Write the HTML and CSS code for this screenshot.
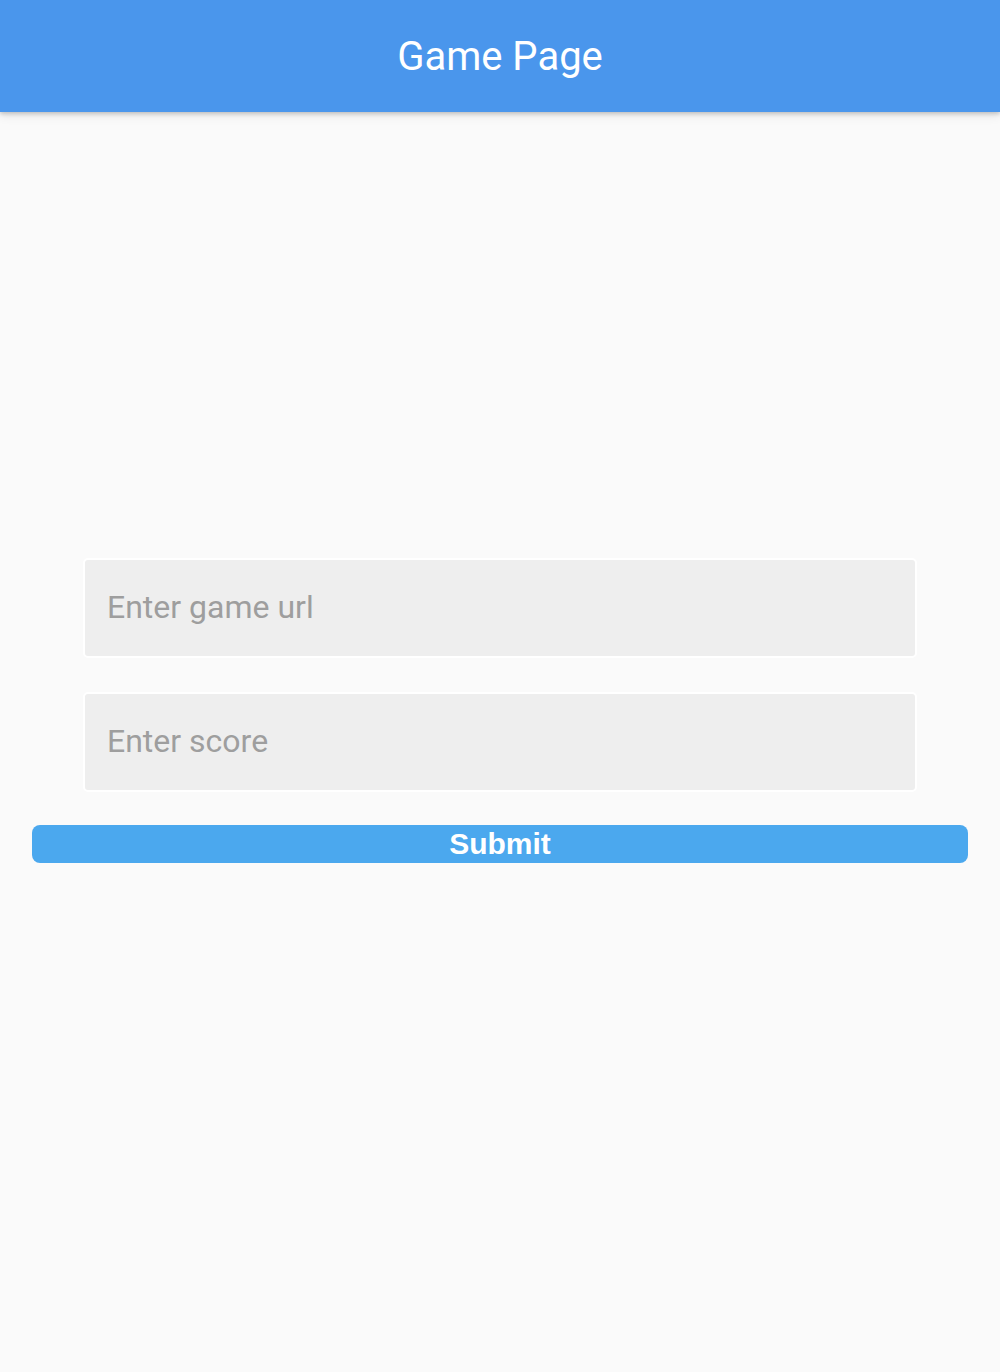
FILE: index.html
```html
<!DOCTYPE html>
<html>
<head>
<meta charset="utf-8">
<link rel="stylesheet" href="styles.css">
</head>
<body>
<header class="app-bar"><h1 class="title">Game Page</h1></header>
<main class="content">
  <form class="form">
    <div class="fields">
      <input class="field" type="text" placeholder="Enter game url">
      <input class="field" type="text" placeholder="Enter score">
    </div>
    <button class="submit" type="button">Submit</button>
  </form>
</main>
</body>
</html>
```
FILE: styles.css
```css
html, body {
  margin: 0;
  padding: 0;
  background: #fafafa;
  font-family: Roboto, "Liberation Sans", sans-serif;
}
.app-bar {
  height: 112px;
  background: #4a96ec;
  display: flex;
  align-items: center;
  justify-content: center;
  box-shadow: 0 2px 4px rgba(0,0,0,0.18), 0 4px 10px rgba(0,0,0,0.08);
  position: relative;
}
.title {
  margin: 0;
  color: #fff;
  font-size: 40px;
  font-weight: 400;
}
.content {
  padding-top: 446px;
}
.form {
  display: flex;
  flex-direction: column;
  gap: 33px;
  margin: 0;
}
.fields {
  display: flex;
  flex-direction: column;
  gap: 34px;
  padding: 0 83px;
}
.field {
  box-sizing: border-box;
  height: 100px;
  width: 100%;
  margin: 0;
  background: #eeeeee;
  border: 2px solid #ffffff;
  border-radius: 5px;
  padding: 0 22px 3px 22px;
  font-family: Roboto, "Liberation Sans", sans-serif;
  font-size: 32px;
  color: #333;
  outline: none;
}
.field::placeholder {
  color: #9e9e9e;
}
.submit {
  margin: 0 32px;
  height: 38px;
  border: none;
  border-radius: 8px;
  background: #4ba8ee;
  color: #fff;
  font-family: "Liberation Sans", Arial, sans-serif;
  font-weight: 700;
  font-size: 30px;
  padding: 0;
  display: flex;
  align-items: center;
  justify-content: center;
  line-height: 38px;
}
```
